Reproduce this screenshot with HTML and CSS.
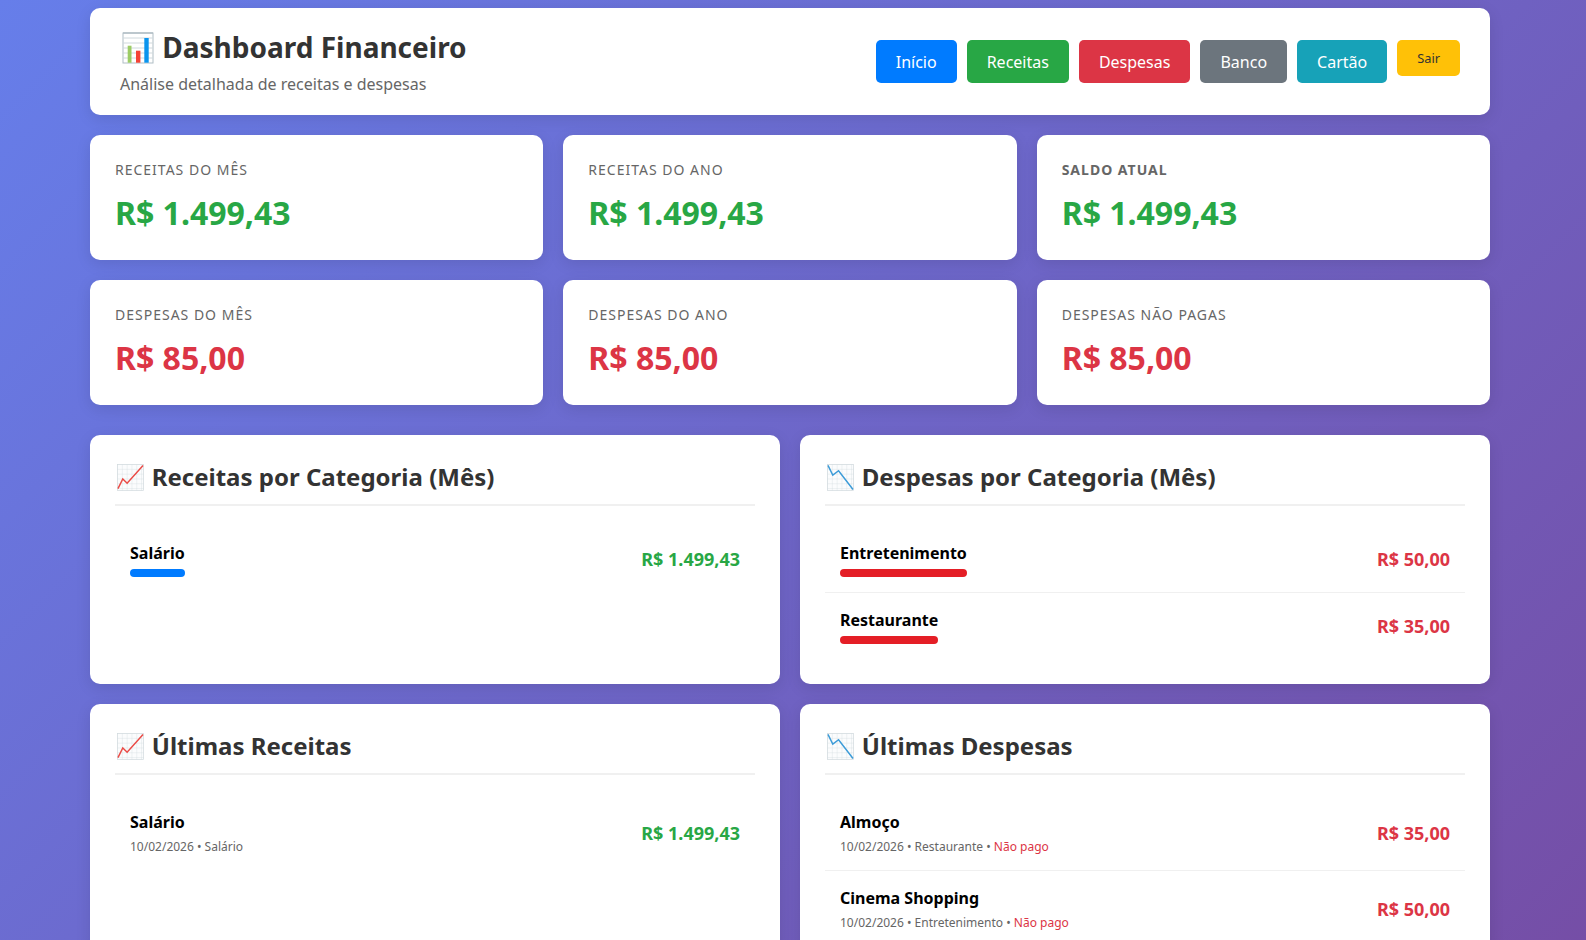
FILE: index.html
```html
<!DOCTYPE html>
<html lang="pt-BR">
<head>
<meta charset="UTF-8" />
<meta name="viewport" content="width=device-width,initial-scale=1" />
<title>Dashboard Financeiro</title>
<link rel="stylesheet" href="styles.css">
</head>

<body>
<svg class="defs" width="0" height="0" aria-hidden="true">
  <defs>
    <pattern id="grid" width="5" height="5" patternUnits="userSpaceOnUse">
      <path d="M5 0H0V5" fill="none" stroke="#cfd8dc" stroke-width=".7"/>
    </pattern>
    <symbol id="emojiBars" viewBox="0 0 32 32">
      <rect x="1" y="1" width="30" height="30" fill="#fff" stroke="#b0bec5" stroke-width="1"/>
      <path d="M1 6H31M1 11H31M1 16H31M1 21H31M1 26H31" stroke="#cfd8dc" stroke-width="1"/>
      <path d="M1 1H31" stroke="#b0bec5" stroke-width="1.4"/>
      <rect x="5.7" y="13.7" width="3.8" height="17" fill="#9ccc65"/>
      <rect x="14" y="18.7" width="4.4" height="12" fill="#f44336"/>
      <rect x="22.3" y="6" width="4.4" height="24.7" fill="#0a94ee"/>
    </symbol>
    <symbol id="emojiUp" viewBox="0 0 28 28">
      <rect x=".5" y=".5" width="27" height="27" fill="#fbfcfd"/>
      <rect x=".5" y=".5" width="27" height="27" fill="url(#grid)" stroke="#cfd8dc" stroke-width=".7"/>
      <path d="M1 25.5 6 15.5 10.5 20 27 1.5" fill="none" stroke="#ea4a45" stroke-width="1.5"/>
    </symbol>
    <symbol id="emojiDown" viewBox="0 0 28 28">
      <rect x=".5" y=".5" width="27" height="27" fill="#fbfcfd"/>
      <rect x=".5" y=".5" width="27" height="27" fill="url(#grid)" stroke="#cfd8dc" stroke-width=".7"/>
      <path d="M1 1.5 6 11.5 12 7 27 26.5" fill="none" stroke="#3b9bd8" stroke-width="1.5"/>
    </symbol>
  </defs>
</svg>

<div class="container">

  <!-- header -->
  <header class="header">
    <div>
      <h1><svg class="emoji emoji-lg"><use href="#emojiBars"/></svg> Dashboard Financeiro</h1>
      <p>Análise detalhada de receitas e despesas</p>
    </div>
    <nav class="nav">
      <a class="btn btn-primary" href="#">Início</a>
      <a class="btn btn-success" href="#">Receitas</a>
      <a class="btn btn-danger" href="#">Despesas</a>
      <a class="btn btn-secondary" href="#">Banco</a>
      <a class="btn btn-info" href="#">Cartão</a>
      <a class="btn btn-warning btn-sm" href="#">Sair</a>
    </nav>
  </header>

  <!-- stats -->
  <section class="stats">
    <div class="stat">
      <div class="stat-label">Receitas do Mês</div>
      <div class="stat-value positive">R$ 1.499,43</div>
    </div>
    <div class="stat">
      <div class="stat-label">Receitas do Ano</div>
      <div class="stat-value positive">R$ 1.499,43</div>
    </div>
    <div class="stat">
      <div class="stat-label strong">Saldo Atual</div>
      <div class="stat-value positive">R$ 1.499,43</div>
    </div>
    <div class="stat">
      <div class="stat-label">Despesas do Mês</div>
      <div class="stat-value negative">R$ 85,00</div>
    </div>
    <div class="stat">
      <div class="stat-label">Despesas do Ano</div>
      <div class="stat-value negative">R$ 85,00</div>
    </div>
    <div class="stat">
      <div class="stat-label">Despesas Não Pagas</div>
      <div class="stat-value negative">R$ 85,00</div>
    </div>
  </section>

  <!-- panels -->
  <section class="panels">
    <div class="panel">
      <h2><svg class="emoji"><use href="#emojiUp"/></svg> Receitas por Categoria (Mês)</h2>
      <div class="item">
        <div>
          <div class="item-name">Salário</div>
          <div class="bar bar-blue"></div>
        </div>
        <div class="item-amount positive">R$ 1.499,43</div>
      </div>
    </div>

    <div class="panel">
      <h2><svg class="emoji"><use href="#emojiDown"/></svg> Despesas por Categoria (Mês)</h2>
      <div class="item">
        <div>
          <div class="item-name">Entretenimento</div>
          <div class="bar bar-red"></div>
        </div>
        <div class="item-amount negative">R$ 50,00</div>
      </div>
      <div class="item">
        <div>
          <div class="item-name">Restaurante</div>
          <div class="bar bar-red"></div>
        </div>
        <div class="item-amount negative">R$ 35,00</div>
      </div>
    </div>

    <div class="panel">
      <h2><svg class="emoji"><use href="#emojiUp"/></svg> Últimas Receitas</h2>
      <div class="item item-dated">
        <div>
          <div class="item-name">Salário</div>
          <div class="item-meta">10/02/2026 • Salário</div>
        </div>
        <div class="item-amount positive">R$ 1.499,43</div>
      </div>
    </div>

    <div class="panel">
      <h2><svg class="emoji"><use href="#emojiDown"/></svg> Últimas Despesas</h2>
      <div class="item item-dated">
        <div>
          <div class="item-name">Almoço</div>
          <div class="item-meta">10/02/2026 • Restaurante • <span class="unpaid">Não pago</span></div>
        </div>
        <div class="item-amount negative">R$ 35,00</div>
      </div>
      <div class="item item-dated">
        <div>
          <div class="item-name">Cinema Shopping</div>
          <div class="item-meta">10/02/2026 • Entretenimento • <span class="unpaid">Não pago</span></div>
        </div>
        <div class="item-amount negative">R$ 50,00</div>
      </div>
    </div>
  </section>

</div>
</body>
</html>
```

FILE: styles.css
```css
/* ---------- reset ---------- */
*
{
  box-sizing:border-box;
  margin:0;
  padding:0;
}
html{overflow:hidden;}
body
{
  min-height:1100px;
  background:linear-gradient(135deg,#667eea 0%,#764ba2 100%);
  font-family:"Noto Sans",sans-serif;
  color:#000;
}
.defs{position:absolute;}
.container
{
  width:1400px;
  margin-left:90px;
  padding-top:8px;
}
.positive{color:#28a745;}
.negative{color:#dc3545;}

/* ===== header ===== */
.header
{
  display:flex;
  justify-content:space-between;
  align-items:center;
  background:#fff;
  border-radius:10px;
  padding:20px 30px;
  margin-bottom:20px;
  box-shadow:0 4px 15px rgba(0,0,0,.1);
}
h1
{
  font-size:28px;
  line-height:38px;
  font-weight:700;
  color:#333;
  margin-bottom:7px;
}
.header p
{
  font-size:16px;
  line-height:22px;
  color:#666;
}
.emoji
{
  display:inline-block;
  width:27px;
  height:27px;
  margin:0 1.5px 0 2px;
  vertical-align:-5px;
}
.emoji-lg
{
  width:32px;
  height:32px;
  margin:0 1px 0 2px;
  vertical-align:-6px;
}
.nav
{
  display:flex;
  gap:10px;
}
.btn
{
  display:inline-block;
  height:43px;
  padding:10px 20px;
  border-radius:5px;
  font-size:16px;
  line-height:24px;
  color:#fff;
  text-decoration:none;
  white-space:nowrap;
}
.btn-primary{background:#007bff;}
.btn-success{background:#28a745;}
.btn-danger{background:#dc3545;}
.btn-secondary{background:#6c757d;}
.btn-info{background:#17a2b8;}
.btn-warning{background:#ffc107;color:#333;}
.btn-sm
{
  height:36px;
  padding:8px 20px;
  font-size:12.8px;
  line-height:20px;
}

/* ===== stats ===== */
.stats
{
  display:grid;
  grid-template-columns:repeat(3,1fr);
  gap:20px;
  margin-bottom:30px;
}
.stat
{
  height:125px;
  background:#fff;
  border-radius:10px;
  padding:25px;
  box-shadow:0 4px 15px rgba(0,0,0,.1);
}
.stat-label
{
  font-size:14px;
  line-height:20px;
  letter-spacing:1px;
  text-transform:uppercase;
  color:#666;
  margin-bottom:11px;
}
.stat-label.strong{font-weight:700;}
.stat-value
{
  font-size:32px;
  line-height:44px;
  font-weight:700;
}

/* ===== panels ===== */
.panels
{
  display:grid;
  grid-template-columns:repeat(2,1fr);
  gap:20px;
}
.panel
{
  background:#fff;
  border-radius:10px;
  padding:25px;
  min-height:249px;
  box-shadow:0 4px 15px rgba(0,0,0,.1);
}
h2
{
  font-size:24px;
  line-height:33px;
  font-weight:700;
  color:#333;
  padding-bottom:11px;
  border-bottom:2px solid #f0f0f0;
  margin-bottom:20px;
}
.item
{
  display:flex;
  justify-content:space-between;
  align-items:center;
  padding:15px;
  border-bottom:1px solid #f0f0f0;
}
.item:last-child{border-bottom:none;}
.item-dated .item-amount{margin-top:2px;}
.item-name
{
  font-size:16px;
  line-height:24px;
  font-weight:700;
}
.item-meta
{
  font-size:12px;
  line-height:16px;
  color:#666;
  margin-top:5px;
}
.unpaid{color:#dc3545;}
.item-amount
{
  font-size:18px;
  line-height:25px;
  font-weight:700;
}
.bar
{
  height:8px;
  border-radius:4px;
  margin-top:4px;
}
.bar-blue{background:#007bff;}
.bar-red{background:#e41e26;}
```
